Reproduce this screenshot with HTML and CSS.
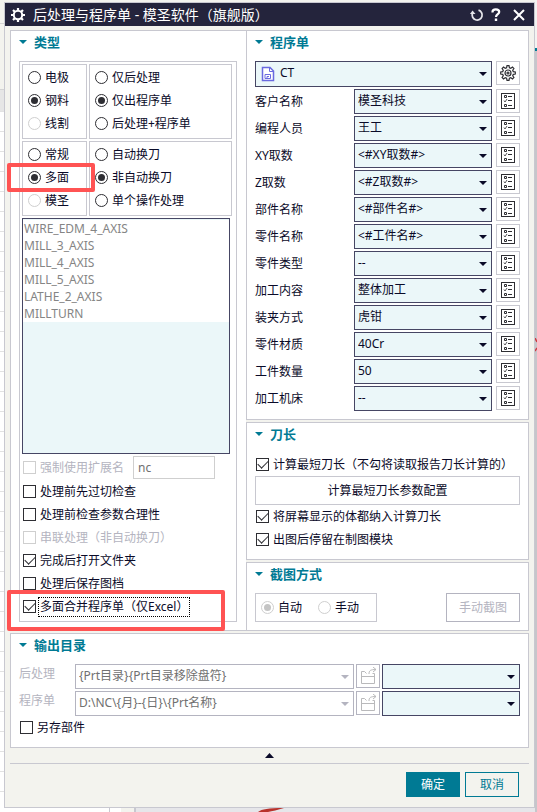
FILE: index.html
```html
<!DOCTYPE html>
<html lang="zh-CN">
<head>
<meta charset="utf-8">
<title>后处理与程序单</title>
<link rel="stylesheet" href="styles.css">
</head>
<body>
<svg class="defs" aria-hidden="true">
  <symbol id="list" viewBox="0 0 16 16">
    <g fill="none" stroke="#2e2e33">
      <rect x="1.5" y="0.500" width="13" height="15"/>
      <path d="M4.500 2.500h2v2h-2zM4.500 11.500h2v2h-2zM8 3.500h4M8 7.500h4M8 12.500h4"/>
      <path d="M4 7.500l1 1.500l2-3" stroke-width=".8"/>
    </g>
  </symbol>
  <symbol id="folder" viewBox="0 0 18 18">
    <g fill="none" stroke="#b9b9bb">
      <path d="M7.500 6.500l-2-2h-3v12h13v-10h-2M2.500 9.500h13"/>
      <path d="M10 7c0-3.500 1.500-4.500 7-4.500M14 0l3 2.500l-3 2.500"/>
    </g>
  </symbol>
</svg>
<div class="desktop">
  <main class="window">
    <header class="titlebar">
      <svg class="gear" viewBox="0 0 14 14" aria-hidden="true"><circle cx="7" cy="7" r="4.200" fill="none" stroke="#fff" stroke-width="2"/><path d="M7 0v2.500M7 11.500V14M0 7h2.500M11.500 7H14M2 2l2 2M10 10l2 2M12 2l-2 2M4 10l-2 2" stroke="#fff" stroke-width="2.200"/></svg>
      <h1>后处理与程序单 - 模圣软件（旗舰版）</h1>
      <button class="tool" aria-label="重置"><svg viewBox="0 0 14 14"><path d="M8.500 2.200a5 5 0 1 1-6 3" fill="none" stroke="#e6e6ea" stroke-width="1.800"/><path d="M0 6l2.500-3.500L5.500 6z" fill="#e6e6ea"/></svg></button>
      <button class="tool" aria-label="帮助"><svg viewBox="0 0 14 14"><path d="M3.500 4.500V4c0-1.700 1.300-2.600 3.300-2.600s3.400.8 3.400 2.600c0 2-3.200 2.300-3.200 5" fill="none" stroke="#fff" stroke-width="2.200"/><path d="M5.800 10.500h2.400V13H5.800z" fill="#fff"/></svg></button>
      <button class="tool close" aria-label="关闭"><svg viewBox="0 0 14 14"><path d="M2 2l10 10M12 2L2 12" stroke="#fff" stroke-width="2"/></svg></button>
    </header>

    <div class="content">
      <div class="columns">
        <section class="panel type-panel">
          <h2>类型</h2>
          <div class="group">
            <div class="pair">
              <div class="box">
                <label class="opt"><input type="radio" name="kind">电极</label>
                <label class="opt"><input type="radio" name="kind" checked>钢料</label>
                <label class="opt"><input type="radio" name="kind" disabled>线割</label>
              </div>
              <div class="box">
                <label class="opt"><input type="radio" name="output">仅后处理</label>
                <label class="opt"><input type="radio" name="output" checked>仅出程序单</label>
                <label class="opt"><input type="radio" name="output">后处理+程序单</label>
              </div>
            </div>
            <div class="pair">
              <div class="box">
                <label class="opt"><input type="radio" name="face">常规</label>
                <label class="opt marked"><input type="radio" name="face" checked>多面</label>
                <label class="opt"><input type="radio" name="face" disabled>模圣</label>
              </div>
              <div class="box">
                <label class="opt"><input type="radio" name="change">自动换刀</label>
                <label class="opt"><input type="radio" name="change" checked>非自动换刀</label>
                <label class="opt"><input type="radio" name="change">单个操作处理</label>
              </div>
            </div>
            <select class="posts" multiple size="6" aria-label="后处理器">
              <option>WIRE_EDM_4_AXIS</option>
              <option>MILL_3_AXIS</option>
              <option>MILL_4_AXIS</option>
              <option>MILL_5_AXIS</option>
              <option>LATHE_2_AXIS</option>
              <option>MILLTURN</option>
            </select>
            <div class="checks">
              <div class="ext">
                <label class="opt off"><input type="checkbox" disabled>强制使用扩展名</label>
                <input class="text" type="text" value="nc" disabled aria-label="扩展名">
              </div>
              <label class="opt"><input type="checkbox">处理前先过切检查</label>
              <label class="opt"><input type="checkbox">处理前检查参数合理性</label>
              <label class="opt off"><input type="checkbox" disabled>串联处理（非自动换刀）</label>
              <label class="opt"><input type="checkbox" checked>完成后打开文件夹</label>
              <label class="opt"><input type="checkbox">处理后保存图档</label>
              <label class="opt merge"><input type="checkbox" checked><span class="focused">多面合并程序单（仅Excel）</span></label>
            </div>
          </div>
        </section>

        <div class="side">
          <section class="panel">
            <h2>程序单</h2>
            <div class="fields">
              <div class="field template">
                <span class="drop"><svg class="doc" viewBox="0 0 14 16" aria-hidden="true"><path d="M1.500 1.500h7.500l3.500 3.500v9.500h-11z" fill="#fff" stroke="#6a6ae0" stroke-width="1.500"/><path d="M8.500 1.500v4h4M4 8.500h5.500v4H4zM6 12.500v-2h2" fill="none" stroke="#6a6ae0"/></svg><select aria-label="模板"><option>CT</option></select></span>
                <button class="icon" aria-label="模板设置"><svg viewBox="0 0 16 16"><g fill="none" stroke="#2e2e33" stroke-width="1.200"><path d="M6.600 2.700L7 .700h2l.4 2 1.400.6 1.700-1.200 1.400 1.400-1.200 1.700.6 1.400 2 .4v2l-2 .4-.6 1.400 1.200 1.700-1.400 1.400-1.700-1.200-1.400.6-.4 2H7l-.4-2-1.400-.6-1.700 1.200-1.400-1.400 1.200-1.700-.6-1.400-2-.4V7l2-.4.6-1.400-1.200-1.700 1.400-1.400 1.700 1.200z"/><circle cx="8" cy="8" r="3"/><circle cx="8" cy="8" r="1"/></g></svg></button>
              </div>
              <div class="field"><label for="f1">客户名称</label><span class="drop"><select id="f1"><option>模圣科技</option></select></span><button class="icon" aria-label="客户名称列表"><svg><use href="#list"/></svg></button></div>
              <div class="field"><label for="f2">编程人员</label><span class="drop"><select id="f2"><option>王工</option></select></span><button class="icon" aria-label="编程人员列表"><svg><use href="#list"/></svg></button></div>
              <div class="field"><label for="f3">XY取数</label><span class="drop"><select id="f3"><option>&lt;#XY取数#&gt;</option></select></span><button class="icon" aria-label="XY取数列表"><svg><use href="#list"/></svg></button></div>
              <div class="field"><label for="f4">Z取数</label><span class="drop"><select id="f4"><option>&lt;#Z取数#&gt;</option></select></span><button class="icon" aria-label="Z取数列表"><svg><use href="#list"/></svg></button></div>
              <div class="field"><label for="f5">部件名称</label><span class="drop"><select id="f5"><option>&lt;#部件名#&gt;</option></select></span><button class="icon" aria-label="部件名称列表"><svg><use href="#list"/></svg></button></div>
              <div class="field"><label for="f6">零件名称</label><span class="drop"><select id="f6"><option>&lt;#工件名#&gt;</option></select></span><button class="icon" aria-label="零件名称列表"><svg><use href="#list"/></svg></button></div>
              <div class="field"><label for="f7">零件类型</label><span class="drop"><select id="f7"><option>--</option></select></span><button class="icon" aria-label="零件类型列表"><svg><use href="#list"/></svg></button></div>
              <div class="field"><label for="f8">加工内容</label><span class="drop"><select id="f8"><option>整体加工</option></select></span><button class="icon" aria-label="加工内容列表"><svg><use href="#list"/></svg></button></div>
              <div class="field"><label for="f9">装夹方式</label><span class="drop"><select id="f9"><option>虎钳</option></select></span><button class="icon" aria-label="装夹方式列表"><svg><use href="#list"/></svg></button></div>
              <div class="field"><label for="f10">零件材质</label><span class="drop"><select id="f10"><option>40Cr</option></select></span><button class="icon" aria-label="零件材质列表"><svg><use href="#list"/></svg></button></div>
              <div class="field"><label for="f11">工件数量</label><span class="drop"><select id="f11"><option>50</option></select></span><button class="icon" aria-label="工件数量列表"><svg><use href="#list"/></svg></button></div>
              <div class="field"><label for="f12">加工机床</label><span class="drop"><select id="f12"><option>--</option></select></span><button class="icon" aria-label="加工机床列表"><svg><use href="#list"/></svg></button></div>
            </div>
          </section>

          <section class="panel">
            <h2>刀长</h2>
            <label class="opt inset"><input type="checkbox" checked>计算最短刀长（不勾将读取报告刀长计算的）</label>
            <button class="wide">计算最短刀长参数配置</button>
            <label class="opt inset"><input type="checkbox" checked>将屏幕显示的体都纳入计算刀长</label>
            <label class="opt inset"><input type="checkbox" checked>出图后停留在制图模块</label>
          </section>

          <section class="panel">
            <h2>截图方式</h2>
            <div class="capture">
              <div class="modes">
                <label class="opt"><input type="radio" name="shot" checked disabled>自动</label>
                <label class="opt"><input type="radio" name="shot" disabled>手动</label>
              </div>
              <button class="shot" disabled>手动截图</button>
            </div>
          </section>
        </div>
      </div>

      <section class="panel output">
        <h2>输出目录</h2>
        <div class="fields">
          <div class="path">
            <label class="off" for="p1">后处理</label>
            <span class="drop"><select id="p1" disabled><option>{Prt目录}{Prt目录移除盘符}</option></select></span>
            <button class="icon" disabled aria-label="浏览后处理目录"><svg class="folder"><use href="#folder"/></svg></button>
            <span class="drop"><select aria-label="后处理子目录"><option></option></select></span>
          </div>
          <div class="path">
            <label class="off" for="p2">程序单</label>
            <span class="drop"><select id="p2" disabled><option>D:\NC\{月}-{日}\{Prt名称}</option></select></span>
            <button class="icon" disabled aria-label="浏览程序单目录"><svg class="folder"><use href="#folder"/></svg></button>
            <span class="drop"><select aria-label="程序单子目录"><option></option></select></span>
          </div>
        </div>
        <label class="opt inset"><input type="checkbox">另存部件</label>
      </section>

      <button class="collapse" aria-label="折叠"><svg viewBox="0 0 9 5"><path d="M0 5L4.500 0L9 5z" fill="#0a0a28"/></svg></button>
      <footer>
        <button class="ok">确定</button>
        <button class="cancel">取消</button>
      </footer>
    </div>
  </main>
  <svg class="redmark bottom" viewBox="0 0 26 4" aria-hidden="true"><path d="M0 4C4 1 10 0 26 0C20 2 14 3 10 4z" fill="#b8322c"/></svg>
  <svg class="redmark right" viewBox="0 0 2 14" aria-hidden="true"><path d="M0 0l2 4M0 13l2-3" stroke="#cc3a44" stroke-width="1.500"/></svg>
</div>
</body>
</html>
```
FILE: styles.css
```css
* { box-sizing: border-box; }

:root {
  --ink: #0a0a28;
  --teal: #007a94;
  --line: #c8c8d0;
  --edge: #464664;
  --field: #ebf7f9;
  --off: #b4b4c0;
  --red: #ff5353;
}

body {
  margin: 0;
  color: var(--ink);
  font: 12px/16px "Noto Sans", "Noto Sans CJK SC", sans-serif;
}

button, input, select {
  margin: 0;
  color: inherit;
  font: inherit;
}

h1, h2 { margin: 0; }

.defs {
  position: absolute;
  width: 0;
  height: 0;
}

/* Sheet and viewport visible behind the dialog */
.desktop {
  position: relative;
  min-height: 100vh;
  padding: 2px 2px 4px 4px;
  background:
    linear-gradient(#f4f4f2 48px, var(--teal) 48px 51px, #c6c6ca 51px) right top / 2px 100% no-repeat,
    linear-gradient(90deg, #fff 109px, #c8c8d0 109px 110px, #fff 110px 121px, #f3f3ee 121px 134px, #c8c8d0 134px 136px, #e6e6ea 136px) left bottom / 100% 4px no-repeat,
    linear-gradient(#f3f3ee 23px, #d4d4d4 23px 24px, #f3f3ee 24px 89px, #d4d4d4 89px 90px, #e6e6e6 90px 111px, transparent 111px) left top / 100% 100% no-repeat,
    repeating-linear-gradient(#fff 0 11px, #e2e2e2 11px 12px, #fff 12px 20px);
}

.window {
  background: #f3f3ee;
  border: 1px solid var(--line);
}

.titlebar {
  display: flex;
  align-items: center;
  height: 23px;
  padding: 0 8px 0 6px;
  background: #24243c;
  color: #fff;
}

.titlebar h1 {
  flex: 1;
  margin-left: 8px;
  font-size: 14px;
  font-weight: 400;
  line-height: 20px;
}

.gear { width: 14px; height: 14px; }

.tool {
  width: 14px;
  height: 14px;
  margin-left: 5px;
  padding: 0;
  background: none;
  border: 0;
}

.tool svg { display: block; width: 14px; height: 14px; }
.close { margin-left: 9px; }

.content { padding: 4px 5px 10px; }

.columns {
  display: grid;
  grid-template-columns: 236fr 283fr;
  margin-bottom: 2px;
}

.side {
  display: flex;
  flex-direction: column;
  gap: 2px;
}

.panel {
  padding: 0 8px 8px;
  background: #fff;
  border: 1px solid var(--line);
}

.type-panel {
  padding-right: 9px;
  border-right: 0;
}

h2 {
  display: flex;
  align-items: center;
  gap: 7px;
  height: 22px;
  margin-bottom: 8px;
  color: var(--teal);
  font-size: 13px;
  font-weight: 700;
}

h2::before {
  content: "";
  border: 4px solid transparent;
  border-top-color: var(--teal);
  border-bottom: 0;
}

.group {
  display: flex;
  flex-direction: column;
  gap: 2px;
  padding: 2px 4px 3px 2px;
  border: 1px solid var(--line);
}

.pair {
  display: grid;
  grid-template-columns: 65fr 143fr;
  gap: 2px;
}

.box {
  padding: 1px 5px 3px;
  border: 1px solid var(--line);
}

.opt {
  display: flex;
  align-items: center;
  gap: 4px;
  height: 23px;
  white-space: nowrap;
}

.off { color: var(--off); }

input[type="radio"], input[type="checkbox"] {
  flex: none;
  display: grid;
  place-items: center;
  width: 13px;
  height: 13px;
  appearance: none;
  background: #fff;
  border: 1px solid #2e2e33;
}

input[type="radio"] { border-radius: 50%; }

input[type="radio"]:checked::before {
  content: "";
  width: 7px;
  height: 7px;
  background: #2e2e33;
  border-radius: 50%;
}

input[type="checkbox"]:checked::before {
  content: "";
  width: 9px;
  height: 5px;
  margin-bottom: 3px;
  border: solid #2e2e33;
  border-width: 0 0 1px 1px;
  transform: rotate(-45deg);
}

input:disabled { border-color: #cfcfcf; }
input[type="radio"]:disabled:checked::before { background: #c4c4c4; }

.marked, .merge { position: relative; }

.marked::after, .merge::after {
  content: "";
  position: absolute;
  border: 4px solid var(--red);
  border-radius: 2px;
  pointer-events: none;
}

.marked::after { inset: -3px -14px -3px -21px; }
.merge::after { inset: -5px 7px -13px -16px; }

.posts {
  width: auto;
  height: 236px;
  margin-right: 2px;
  padding: 1px 0 0;
  overflow: hidden;
  background: var(--field);
  border: 1px solid var(--edge);
  border-radius: 0;
  color: #858585;
}

.posts option {
  min-height: 17px;
  padding: 0 1px;
  background: #fff;
  line-height: 17px;
}

.checks { padding-left: 1px; }

.ext {
  display: flex;
  gap: 9px;
  margin-bottom: 1px;
}

.text {
  width: 82px;
  height: 23px;
  padding: 0 4px;
  background: #fff;
  border: 1px solid var(--off);
  color: #707070;
}

.focused {
  margin-left: -2px;
  padding: 1px;
  border: 1px dotted #000;
}

.fields {
  display: flex;
  flex-direction: column;
  gap: 2px;
}

.field {
  display: grid;
  grid-template-columns: 95fr 138fr 24px;
  column-gap: 4px;
}

.field label {
  align-self: center;
  margin-right: -4px;
}

.template { grid-template-columns: 1fr 24px; }

.drop {
  position: relative;
  display: grid;
}

.drop::after {
  content: "";
  position: absolute;
  top: 50%;
  right: 5px;
  margin-top: -2px;
  border: 4px solid transparent;
  border-top-color: var(--ink);
  border-bottom: 0;
  pointer-events: none;
}

.drop:has(:disabled)::after { border-top-color: var(--off); }

.drop select {
  width: 100%;
  height: 25px;
  padding: 0 16px 2px 3px;
  appearance: none;
  background: var(--field);
  border: 1px solid var(--edge);
  border-radius: 0;
}

.drop select:disabled {
  background: #fff;
  border-color: var(--off);
  color: #707070;
  opacity: 1;
}

.template select {
  height: 26px;
  padding-left: 24px;
}

.doc {
  position: absolute;
  top: 5px;
  left: 6px;
  width: 14px;
  height: 16px;
}

.icon {
  display: grid;
  place-items: center;
  width: 24px;
  height: 24px;
  padding: 0;
  background: #fff;
  border: 1px solid var(--line);
}

.icon svg { width: 16px; height: 16px; }
.icon .folder { width: 18px; height: 18px; }
.icon:disabled { border-color: var(--off); }

.inset { padding-left: 1px; }

.wide {
  display: block;
  width: 100%;
  height: 29px;
  background: #fff;
  border: 1px solid var(--line);
}

.capture {
  display: flex;
  justify-content: space-between;
}

.modes {
  display: flex;
  align-items: center;
  gap: 16px;
  height: 29px;
  padding: 0 17px 0 5px;
  border: 1px solid var(--line);
}

.shot {
  width: 74px;
  background: #fff;
  border: 1px solid var(--off);
  color: var(--off);
}

.path {
  display: grid;
  grid-template-columns: 54px 279fr 24px 138fr;
  column-gap: 2px;
}

.path label { align-self: start; padding-top: 2px; }

.collapse {
  display: block;
  width: 100%;
  height: 16px;
  padding: 0;
  background: none;
  border: 0;
  border-bottom: 1px solid var(--line);
}

.collapse svg {
  display: block;
  width: 9px;
  height: 5px;
  margin: 0 auto;
}

footer {
  display: flex;
  justify-content: flex-end;
  gap: 5px;
  padding: 8px 10px 0;
}

footer button {
  width: 54px;
  height: 25px;
  padding: 0;
  background: none;
  border: 1px solid var(--teal);
  color: var(--teal);
}

footer .ok {
  background: var(--teal);
  color: #fff;
}

.redmark { position: absolute; }

.bottom {
  bottom: 0;
  left: 48%;
  width: 26px;
  height: 4px;
}

.right {
  top: 338px;
  right: 0;
  width: 2px;
  height: 14px;
}
```
